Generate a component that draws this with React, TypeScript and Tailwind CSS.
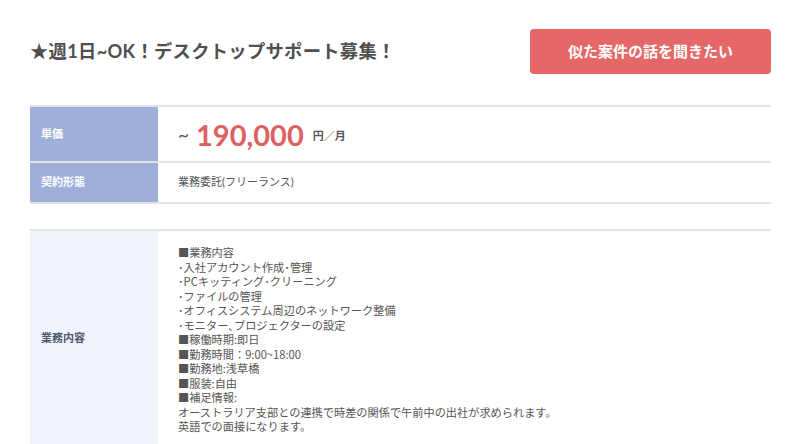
import React from 'react';

const jp = "font-['Lato','Noto_Sans_CJK_JP',sans-serif]";

const lines = [
  '■業務内容',
  '･入社アカウント作成･管理',
  '･PCキッティング･クリーニング',
  '･ファイルの管理',
  '･オフィスシステム周辺のネットワーク整備',
  '･モニター､プロジェクターの設定',
  '■稼働時期:即日',
  '■勤務時間：9:00~18:00',
  '■勤務地:浅草橋',
  '■服装:自由',
  '■補足情報:',
  'オーストラリア支部との連携で時差の関係で午前中の出社が求められます。',
  '英語での面接になります。',
];

const App = () => {
  return (
    <div className={`min-h-screen w-[800px] bg-white pl-[30px] pr-[29px] pt-[29px] ${jp}`}>
      <div className="flex items-center justify-between">
        <h1 className="text-[18.3px] font-bold tracking-[0.3px] text-[#4f4f4f]">
          ★週1日~OK！デスクトップサポート募集！
        </h1>
        <button className="h-[45px] w-[241px] rounded-[4px] bg-[#e66767] text-[15px] font-semibold text-white">
          似た案件の話を聞きたい
        </button>
      </div>

      <div className="mt-[31px] border-t-2 border-[#e3e3e3]">
        <div className="flex h-[56px] border-b-2 border-[#e3e3e3]">
          <div className="flex w-[128px] items-center bg-[#9eb0d9] pl-[11px] text-[11px] font-bold text-white">
            単価
          </div>
          <div className="flex items-center pl-[20px] text-[#555]">
            <span className="text-[19px] leading-none">~</span>
            <span className="ml-[7px] text-[29px] font-bold leading-none text-[#dc6262]">190,000</span>
            <span className="ml-[9px] mt-[4px] text-[11px] font-bold text-[#555]">円／月</span>
          </div>
        </div>
        <div className="flex h-[41px] border-b-2 border-[#e3e3e3]">
          <div className="flex w-[128px] items-center bg-[#9eb0d9] pl-[11px] text-[11px] font-bold text-white">
            契約形態
          </div>
          <div className="flex items-center pl-[20px] text-[11px] text-[#555]">
            業務委託(フリーランス)
          </div>
        </div>
      </div>

      <div className="mt-[25px] border-t-2 border-[#e3e3e3]">
        <div className="flex">
          <div className="flex w-[128px] items-center bg-[#f1f3fa] pl-[11px] text-[11px] font-bold text-[#4f586f]">
            業務内容
          </div>
          <div className="pl-[20px] pt-[14px] pb-[12px] font-['Noto_Sans_CJK_JP',sans-serif] text-[11.2px] leading-[14.5px] text-[#555]">
            {lines.map((l) => (
              <div key={l}>{l}</div>
            ))}
          </div>
        </div>
      </div>
    </div>
  );
};

export default App;
